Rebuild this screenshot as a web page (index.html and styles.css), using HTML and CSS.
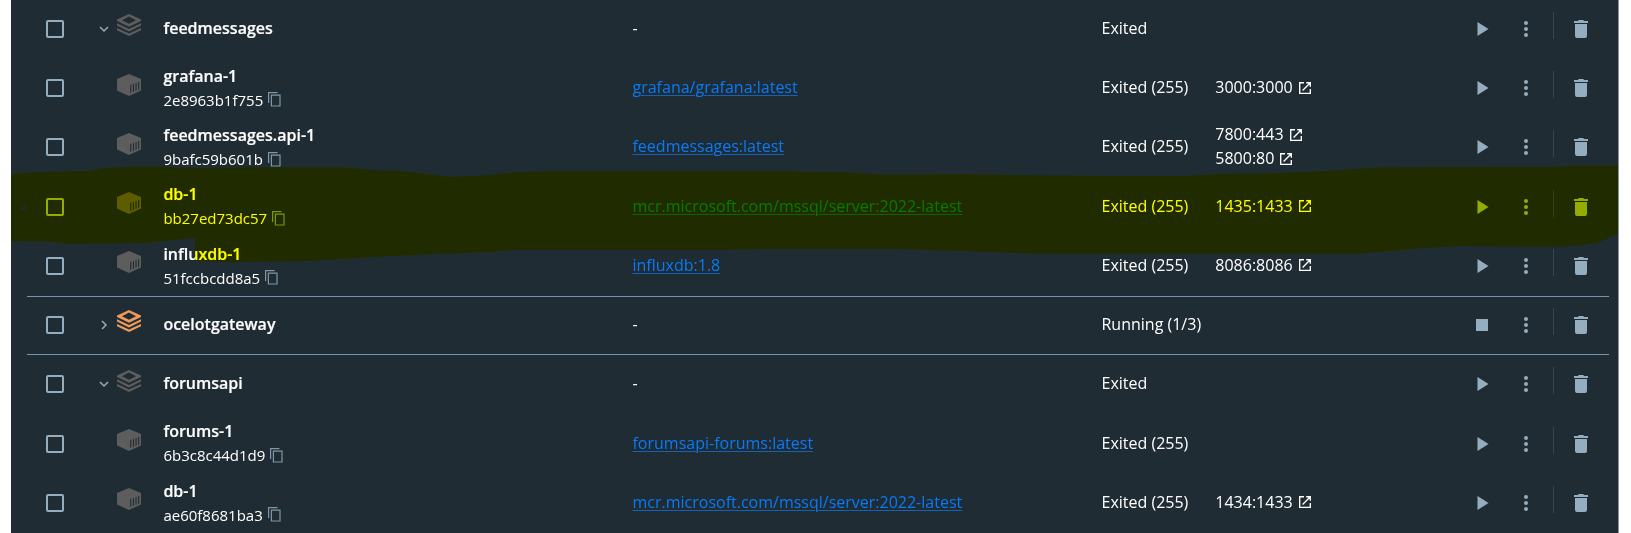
FILE: index.html
```html
<!DOCTYPE html>
<html lang="en">
<head>
<meta charset="utf-8">
<title>Containers</title>
<link rel="stylesheet" href="styles.css">
</head>
<body>
<svg class="sprite" aria-hidden="true">
  <symbol id="stack" viewBox="0 0 24 22">
    <path fill-rule="evenodd" d="M12 0 24 5.6V7L12 12.8 0 7V5.6ZM12 2.6 5 6.2 12 9.8 19 6.2Z"/>
    <path d="M0 9.3 12 15 24 9.3V11.6L12 17.4 0 11.6ZM0 13.9 12 19.6 24 13.9V16.2L12 22 0 16.2Z"/>
  </symbol>
  <symbol id="cube" viewBox="0 0 24 22">
    <path fill-rule="evenodd" d="M12 0 24 5V16.5L12 22 0 16.5V5ZM13.2 11V19L14.3 18.4V10.5ZM15.9 10.2V18L17 17.4V9.7ZM18.5 9.2V17L19.6 16.4V8.7ZM21.1 8.2V16L22.2 15.4V7.7Z"/>
  </symbol>
  <symbol id="copy" viewBox="0 0 13 15">
    <path d="M.6 11V.7H9.5M3.4 3.1H12V14H3.4Z" fill="none" stroke="currentColor" stroke-width="1.2"/>
  </symbol>
  <symbol id="open" viewBox="0 0 12 12">
    <path d="M5 .7H.7V11.3H11.3V7M7.2.7H11.3V4.8M11 1 3.6 8.4" fill="none" stroke="currentColor" stroke-width="1.35"/>
  </symbol>
  <symbol id="down" viewBox="0 0 10 10"><path d="M1 3 5 7 9 3" fill="none" stroke="currentColor" stroke-width="1.5"/></symbol>
  <symbol id="right" viewBox="0 0 10 10"><path d="M3 1 7 5 3 9" fill="none" stroke="currentColor" stroke-width="1.5"/></symbol>
  <symbol id="play" viewBox="0 0 12 14"><path d="M.5 0 11.5 7 .5 14Z"/></symbol>
  <symbol id="stop" viewBox="0 0 12 12"><path d="M0 0H12V12H0Z"/></symbol>
  <symbol id="more" viewBox="0 0 4 16"><circle cx="2" cy="2" r="2"/><circle cx="2" cy="8" r="2"/><circle cx="2" cy="14" r="2"/></symbol>
  <symbol id="trash" viewBox="0 0 14 18"><path d="M0 1H3.8L4.8 0H9.2L10.2 1H14V3H0ZM1 4H13V16A2 2 0 0 1 11 18H3A2 2 0 0 1 1 16Z"/></symbol>
</svg>
<main class="panel">
  <div class="table" id="table"></div>
  <svg class="marker" viewBox="0 0 1607 533" aria-hidden="true">
    <path transform="translate(-11 0)" fill-rule="evenodd" d="M11 176 16 173.5 50 171.5 90 171 100 168.5 133 166.3 160 166.3 175 167.5 200 168 245 167.2 345 167.5 362 169 385 171H400L416 172.5 436 175 448 177 489 175 514 172.3 538 171.2H788L842 172.3 884 174.5 967 174 1034 175.3 1100 175.8 1185 176 1215 174 1270 173.3 1322 171.3 1379 167.3 1550 166.7 1572 165.7H1618V233.5L1607 239 1597 243 1582 245.5 1553 246.7 1459 246 1423 248.3 1375 252.3 1358 253.7H1047L994 252.3 967 251.3 891 249H761L730 250H514L487 252.3 431 254 400 255.7 353 258.3 317 260.7 233 262.3 195 261V238L143 243.3 67 243.7 53 242 11 241ZM20 209 25.5 205.3V210Z"/>
  </svg>
</main>
<script src="rows.js"></script>
</body>
</html>
```
FILE: styles.css
```css
* { box-sizing: border-box; }
body {
  margin: 0;
  background: #fff;
  font-family: "Open Sans", "Noto Sans", sans-serif;
  font-size: 16px;
  line-height: 24px;
  color: #fff;
}
.sprite { position: absolute; width: 0; height: 0; }
svg { display: block; fill: currentColor; flex: none; }
.panel {
  position: relative;
  isolation: isolate;
  width: 1608px;
  height: 533px;
  margin-left: 11px;
  padding: 0 9px 0 16px;
  overflow: hidden;
  background: #202c33;
  border-right: 1px solid #8b9296;
}
.table { margin-top: -0.7px; }
.row {
  display: grid;
  grid-template-columns: 63px 27px 46.4px 469.1px 469px 113.8px 1fr 149px;
  align-items: center;
  height: 59.25px;
}
.group-end { border-bottom: 1px solid #7794ab; }
.container.group-end { height: 60.25px; margin-bottom: -1px; }
.checkbox {
  width: 18px;
  height: 18px;
  margin-left: 19px;
  border: 2px solid #94adbf;
  border-radius: 2px;
}
.chevron { width: 10px; height: 10px; margin-left: 9px; color: #94adbf; }
.kind { width: 24px; height: 22px; margin-bottom: 7px; color: #5d5d5d; }
.running { color: #ed9a5c; }
.name { font-weight: 600; -webkit-text-stroke: 0.2px currentColor; }
.identifier { display: flex; align-items: center; gap: 5px; font-size: 15px; }
.identifier svg { width: 13px; height: 15px; color: #7e96a8; }
.cell { margin-top: -2px; white-space: nowrap; }
.cell.title { margin-top: -0.4px; }
.group .cell.title { margin-top: -2px; }
.image { color: #087af8; text-decoration: underline 1px #1262b8; text-underline-offset: 2px; }
.port { display: flex; align-items: center; gap: 6px; }
.port svg { width: 12px; height: 12px; margin-top: 1px; }
.actions {
  display: grid;
  grid-template-columns: 45px 42px 13px 40px;
  align-items: center;
  justify-items: center;
  color: #94adbf;
}
.play { width: 12px; height: 14px; margin-left: 1px; }
.stop { width: 12px; height: 12px; margin-right: 1px; }
.more { width: 4px; height: 16px; }
.divider { width: 1px; height: 27px; margin-bottom: 7px; background: #37454d; }
.trash { width: 14px; height: 18px; margin-left: 1px; }
.marker {
  position: absolute;
  inset: 0 auto auto 0;
  width: 1607px;
  height: 533px;
  fill: #ff0;
  mix-blend-mode: multiply;
  pointer-events: none;
}
```
FILE: rows.js
```js
const rows = [
  { name: "feedmessages", group: "down", status: "Exited" },
  { name: "grafana-1", id: "2e8963b1f755", image: "grafana/grafana:latest", status: "Exited (255)", ports: ["3000:3000"] },
  { name: "feedmessages.api-1", id: "9bafc59b601b", image: "feedmessages:latest", status: "Exited (255)", ports: ["7800:443", "5800:80"] },
  { name: "db-1", id: "bb27ed73dc57", image: "mcr.microsoft.com/mssql/server:2022-latest", status: "Exited (255)", ports: ["1435:1433"] },
  { name: "influxdb-1", id: "51fccbcdd8a5", image: "influxdb:1.8", status: "Exited (255)", ports: ["8086:8086"], end: true },
  { name: "ocelotgateway", group: "right", status: "Running (1/3)", running: true, end: true },
  { name: "forumsapi", group: "down", status: "Exited" },
  { name: "forums-1", id: "6b3c8c44d1d9", image: "forumsapi-forums:latest", status: "Exited (255)" },
  { name: "db-1", id: "ae60f8681ba3", image: "mcr.microsoft.com/mssql/server:2022-latest", status: "Exited (255)", ports: ["1434:1433"] }
];
const icon = (id, cls = "") => `<svg class="${cls}"><use href="#${id}"/></svg>`;
document.getElementById("table").innerHTML = rows.map(r => `
  <div class="row ${r.group ? "group" : "container"} ${r.end ? "group-end" : ""}">
    <span class="checkbox"></span>
    <div>${r.group ? icon(r.group, "chevron") : ""}</div>
    ${icon(r.group ? "stack" : "cube", "kind" + (r.running ? " running" : ""))}
    <div class="cell title">
      <div class="name">${r.name}</div>
      ${r.id ? `<div class="identifier"><span>${r.id}</span>${icon("copy")}</div>` : ""}
    </div>
    <div class="cell">${r.image ? `<span class="image">${r.image}</span>` : "-"}</div>
    <div class="cell">${r.status}</div>
    <div class="cell">${(r.ports || []).map(p => `<div class="port"><span>${p}</span>${icon("open")}</div>`).join("")}</div>
    <div class="actions">
      ${r.running ? icon("stop", "stop") : icon("play", "play")}
      ${icon("more", "more")}
      <span class="divider"></span>
      ${icon("trash", "trash")}
    </div>
  </div>`).join("");
```
